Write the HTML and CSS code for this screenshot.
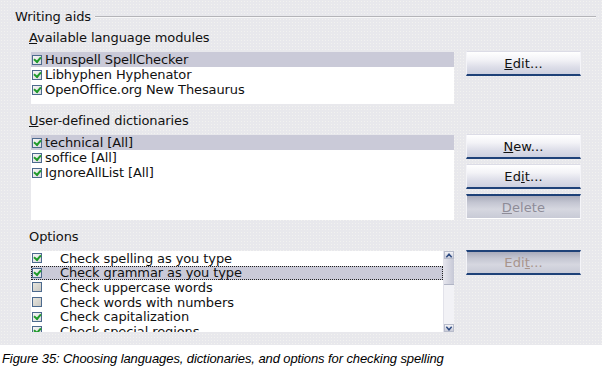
FILE: index.html
```html
<!DOCTYPE html>
<html>
<head>
<meta charset="utf-8">
<link rel="stylesheet" href="styles.css">
</head>
<body>
<div class="dialog">
  <div class="frame-title"><span class="title-text">Writing aids</span><div class="rule"></div></div>

  <div class="label label-first"><u>A</u>vailable language modules</div>
  <div class="group">
    <div class="list list-modules">
      <div class="item selected"><span class="cb on"></span><span>Hunspell SpellChecker</span></div>
      <div class="item"><span class="cb on"></span><span>Libhyphen Hyphenator</span></div>
      <div class="item"><span class="cb on"></span><span>OpenOffice.org New Thesaurus</span></div>
    </div>
    <div class="buttons">
      <div class="btn"><u>E</u>dit...</div>
    </div>
  </div>

  <div class="label"><u>U</u>ser-defined dictionaries</div>
  <div class="group">
    <div class="list list-dicts">
      <div class="item selected"><span class="cb on"></span><span>technical [All]</span></div>
      <div class="item"><span class="cb on"></span><span>soffice [All]</span></div>
      <div class="item"><span class="cb on"></span><span>IgnoreAllList [All]</span></div>
    </div>
    <div class="buttons">
      <div class="btn"><u>N</u>ew...</div>
      <div class="btn">Ed<u>i</u>t...</div>
      <div class="btn disabled"><u>D</u>elete</div>
    </div>
  </div>

  <div class="label">Options</div>
  <div class="group">
    <div class="list list-options">
      <div class="options-items">
        <div class="item opt"><span class="cb on"></span><span class="opt-text">Check spelling as you type</span></div>
        <div class="item opt selected focus"><span class="cb on"></span><span class="opt-text">Check grammar as you type</span></div>
        <div class="item opt"><span class="cb"></span><span class="opt-text">Check uppercase words</span></div>
        <div class="item opt"><span class="cb"></span><span class="opt-text">Check words with numbers</span></div>
        <div class="item opt"><span class="cb on"></span><span class="opt-text">Check capitalization</span></div>
        <div class="item opt"><span class="cb on"></span><span class="opt-text">Check special regions</span></div>
      </div>
      <div class="scrollbar">
        <div class="sb-btn">
          <svg width="9" height="7" viewBox="0 0 9 7"><path d="M1.5 5.5 L4.5 2 L7.5 5.5" fill="none" stroke="#2d4a80" stroke-width="1.6"/></svg>
        </div>
        <div class="sb-thumb"></div>
        <div class="sb-track"></div>
        <div class="sb-btn">
          <svg width="9" height="7" viewBox="0 0 9 7"><path d="M1.5 1.5 L4.5 5 L7.5 1.5" fill="none" stroke="#2d4a80" stroke-width="1.6"/></svg>
        </div>
      </div>
    </div>
    <div class="buttons">
      <div class="btn disabled focused">Edi<u>t</u>...</div>
    </div>
  </div>
</div>
<p class="caption">Figure 35: Choosing languages, dictionaries, and options for checking spelling</p>
</body>
</html>
```

FILE: styles.css
```css
html, body {
  margin: 0;
  padding: 0;
  background: #ffffff;
}

body {
  width: 602px;
  height: 379px;
  overflow: hidden;
  font-family: "DejaVu Sans", Verdana, sans-serif;
  font-size: 13px;
  color: #111111;
}

.dialog {
  height: 345px;
  box-sizing: border-box;
  padding: 9px 0 0 0;
  background-color: #e8e8ec;
  background-image: radial-gradient(circle, #f2f2f0 0.6px, transparent 0.7px);
  background-size: 3px 3px;
}

.frame-title {
  display: flex;
  align-items: center;
  height: 15px;
  padding-left: 15px;
  padding-right: 6px;
}

.title-text {
  line-height: 15px;
  letter-spacing: -0.1px;
}

.rule {
  flex: 1;
  height: 1px;
  margin-left: 4px;
  background: #b4b4b8;
  border-bottom: 1px solid #f8f8f8;
  margin-top: 1px;
}

.label {
  margin-left: 29px;
  margin-top: 9px;
  margin-bottom: 7px;
  line-height: 15px;
  height: 15px;
  letter-spacing: -0.1px;
}

.label-first {
  margin-top: 6px;
}

.label u {
  text-decoration-thickness: 1px;
  text-underline-offset: 1px;
}

.group {
  display: flex;
  align-items: flex-start;
  margin-left: 31px;
}

.list {
  width: 423px;
  background: #ffffff;
  box-sizing: border-box;
}

.list-modules {
  height: 52px;
}

.list-dicts {
  height: 85px;
}

.list-options {
  height: 81px;
  display: flex;
  overflow: hidden;
}

.options-items {
  flex: 1;
}

.item {
  display: flex;
  align-items: center;
  height: 15px;
  line-height: 15px;
  white-space: nowrap;
  letter-spacing: -0.1px;
}

.item.opt {
  height: 14.6px;
}

.item.selected {
  background: #cacad8;
}

.item.focus {
  outline: 1px dotted #222222;
  outline-offset: -1px;
}

.cb {
  width: 10px;
  height: 10px;
  margin-left: 1px;
  margin-right: 3px;
  flex: none;
  box-sizing: border-box;
  border: 1px solid #4d6a8e;
  background: linear-gradient(135deg, #e8e6de 0%, #c9c8c2 100%);
  position: relative;
}

.cb.on {
  background: linear-gradient(135deg, #f6f6f4 0%, #d9dbe0 100%);
}

.cb.on::after {
  content: "";
  position: absolute;
  left: 1px;
  top: 0px;
  width: 3px;
  height: 5px;
  border-right: 2px solid #1f9a2a;
  border-bottom: 2px solid #1f9a2a;
  transform: translate(1px, -0.5px) rotate(40deg);
}

.opt .cb {
  margin-right: 18px;
}

.opt-text {
  flex: 1;
}

.scrollbar {
  width: 10px;
  display: flex;
  flex-direction: column;
  background-color: #f2f2f6;
  background-image: radial-gradient(circle, #d8dae4 0.6px, transparent 0.7px);
  background-size: 2px 2px;
  border-left: 1px solid #e2e2ea;
}

.sb-btn {
  height: 8px;
  display: flex;
  align-items: center;
  justify-content: center;
  background: linear-gradient(180deg, #f4f4f8, #c8cad8);
  border: 1px solid #b8bccb;
  box-sizing: border-box;
}

.sb-thumb {
  height: 26px;
  background: linear-gradient(90deg, #e4e4ec, #c6c8d6);
  border-bottom: 1px solid #b0b4c4;
  box-sizing: border-box;
}

.sb-track {
  flex: 1;
}

.buttons {
  display: flex;
  flex-direction: column;
  gap: 5px;
  margin-left: 12px;
  margin-top: -1px;
}

.btn {
  width: 115px;
  height: 25px;
  box-sizing: border-box;
  display: flex;
  align-items: center;
  justify-content: center;
  background: linear-gradient(180deg, #ffffff 0%, #f3f3f7 35%, #dcdde8 70%, #cdd0df 100%);
  border-top: 1px solid #dcdce6;
  border-left: 1px solid #f4f4f8;
  border-right: 1px solid #f4f4f8;
  border-bottom: 2px solid #1e4178;
  color: #111111;
  letter-spacing: 0.1px;
}

.btn u {
  text-decoration-thickness: 1px;
  text-underline-offset: 1px;
}

.btn.disabled {
  background: linear-gradient(180deg, #a9abbb 0%, #c4c6d2 30%, #d6d7e0 60%, #c8cad6 100%);
  border-top: 2px solid #1e4178;
  border-bottom: 1px solid #ffffff;
  color: #8e8c98;
}

.btn.focused {
  border-bottom: 2px solid #1e4178;
  color: #a8948c;
}

.caption {
  margin: 5px 0 0 2px;
  font-family: "Liberation Sans", Arial, sans-serif;
  font-style: italic;
  font-size: 13px;
  letter-spacing: -0.1px;
  line-height: 17px;
  color: #000000;
}
```
